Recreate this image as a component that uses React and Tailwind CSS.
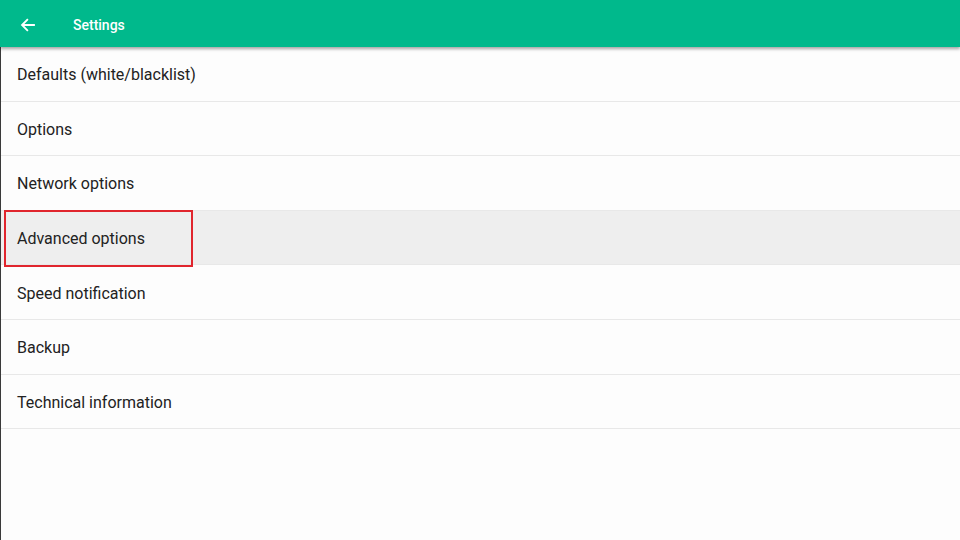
import React from "react";

const items = [
  "Defaults (white/blacklist)",
  "Options",
  "Network options",
  "Advanced options",
  "Speed notification",
  "Backup",
  "Technical information",
];

const App = () => {
  return (
    <div
      className="w-[960px] h-[540px] bg-[#fdfdfd] flex flex-col overflow-hidden"
      style={{ fontFamily: "Roboto, 'Liberation Sans', sans-serif" }}
    >
      {/* Toolbar */}
      <div className="h-[47px] pt-[3px] bg-[#00b98c] flex items-center shadow-[0_2px_3px_rgba(0,0,0,0.35)] relative z-10 shrink-0">
        <svg className="ml-[19px] w-[18px] h-[18px]" viewBox="0 0 24 24" fill="none" stroke="#ffffff" strokeWidth="2.4" strokeLinecap="square">
          <path d="M20 12H5M11 5l-7 7 7 7" />
        </svg>
        <span className="ml-[36px] text-white text-[14px] font-medium">Settings</span>
      </div>

      {/* List */}
      <div className="flex-1 border-l border-[#3a3a3a] relative">
        {items.map((label, i) => (
          <div
            key={label}
            className={`h-[54.6px] pt-[3px] flex items-center border-b border-[#e8e8e8] pl-[16px] text-[16px] text-[#222222] ${
              i === 3 ? "bg-[#eeeeee]" : ""
            }`}
          >
            {label}
          </div>
        ))}
        {/* Highlight box */}
        <div className="absolute left-[3px] top-[163px] w-[189px] h-[57px] border-2 border-[#e0252d]" />
      </div>
    </div>
  );
};

export default App;
